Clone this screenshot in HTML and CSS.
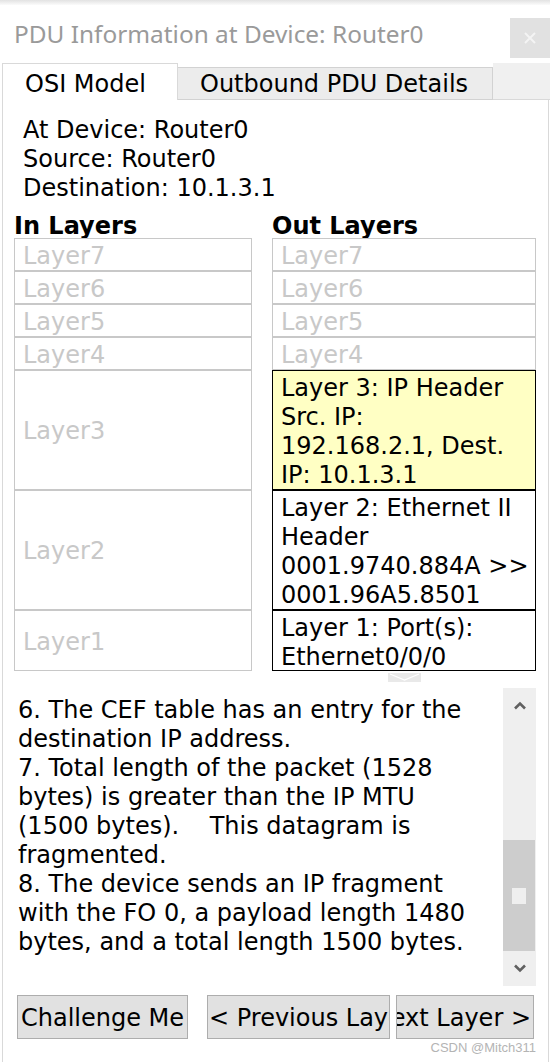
FILE: index.html
```html
<!DOCTYPE html>
<html>
<head>
<meta charset="utf-8">
<link rel="stylesheet" href="styles.css">
</head>
<body>
<div class="shadow"></div>
<header class="titlebar">
  <div class="title">PDU Information at Device: Router0</div>
  <div class="close">
    <svg width="12" height="12" viewBox="0 0 12 12"><path d="M1 1L11 11M11 1L1 11" stroke="#f4f4f4" stroke-width="2" fill="none"/></svg>
  </div>
</header>
<nav class="tabbar">
  <div class="tab active">OSI Model</div>
  <div class="tab">Outbound PDU Details</div>
  <div class="tabfill"></div>
</nav>
<main class="panel">
  <div class="info">
    <div>At Device: Router0</div>
    <div>Source: Router0</div>
    <div>Destination: 10.1.3.1</div>
  </div>
  <div class="columns">
    <section class="col col-in">
      <h2 class="colhead">In Layers</h2>
      <div class="layer gray h33">Layer7</div>
      <div class="layer gray h33">Layer6</div>
      <div class="layer gray h33">Layer5</div>
      <div class="layer gray h33">Layer4</div>
      <div class="layer gray h120">Layer3</div>
      <div class="layer gray h120">Layer2</div>
      <div class="layer gray h61">Layer1</div>
    </section>
    <section class="col col-out">
      <h2 class="colhead">Out Layers</h2>
      <div class="layer gray h33">Layer7</div>
      <div class="layer gray h33">Layer6</div>
      <div class="layer gray h33">Layer5</div>
      <div class="layer gray h33">Layer4</div>
      <div class="layer active-layer yellow h120">Layer 3: IP Header<br>Src. IP:<br>192.168.2.1, Dest.<br>IP: 10.1.3.1</div>
      <div class="layer active-layer h120">Layer 2: Ethernet II<br>Header<br>0001.9740.884A &gt;&gt;<br>0001.96A5.8501</div>
      <div class="layer active-layer h61">Layer 1: Port(s):<br>Ethernet0/0/0</div>
      <div class="expander">
        <svg width="33" height="9" viewBox="0 0 33 9"><rect x="0" y="0" width="33" height="9" fill="#e9e9e9"/><path d="M2 1L16.5 7L31 1" stroke="#ffffff" stroke-width="1.2" fill="none"/></svg>
      </div>
    </section>
  </div>
  <div class="textbox">
    <div class="textcontent">
      <div class="tl">6. The CEF table has an entry for the</div>
      <div class="tl">destination IP address.</div>
      <div class="tl">7. Total length of the packet (1528</div>
      <div class="tl">bytes) is greater than the IP MTU</div>
      <div class="tl">(1500 bytes).    This datagram is</div>
      <div class="tl">fragmented.</div>
      <div class="tl">8. The device sends an IP fragment</div>
      <div class="tl">with the FO 0, a payload length 1480</div>
      <div class="tl">bytes, and a total length 1500 bytes.</div>
    </div>
    <div class="scrollbar">
      <div class="sb-arrow">
        <svg width="12" height="9" viewBox="0 0 12 9"><path d="M1 7.5L6 2.5L11 7.5" stroke="#606060" stroke-width="2.6" fill="none"/></svg>
      </div>
      <div class="sb-track">
        <div class="sb-thumb"><div class="sb-grip"></div></div>
      </div>
      <div class="sb-arrow">
        <svg width="12" height="9" viewBox="0 0 12 9"><path d="M1 1.5L6 6.5L11 1.5" stroke="#606060" stroke-width="2.6" fill="none"/></svg>
      </div>
    </div>
  </div>
  <div class="buttons">
    <div class="btn btn-challenge">Challenge Me</div>
    <div class="btn btn-prev"><span>&lt; Previous Layer</span></div>
    <div class="btn btn-next"><span>Next Layer &gt;</span></div>
  </div>
  <div class="watermark">CSDN @Mitch311</div>
</main>
</body>
</html>
```

FILE: styles.css
```css
* { box-sizing: border-box; }
html, body { margin: 0; padding: 0; background: #ffffff; }
body {
  width: 550px;
  height: 1062px;
  overflow: hidden;
  font-family: "DejaVu Sans", Verdana, sans-serif;
  font-size: 24px;
  color: #000;
}
.shadow {
  height: 5px;
  background: linear-gradient(#e2e2e2, #fbfbfb);
}
.titlebar {
  height: 58px;
  display: flex;
  align-items: flex-start;
  background: #fff;
}
.title {
  font-family: "Noto Sans", "Open Sans", sans-serif;
  font-size: 24.4px;
  color: #9a9a9a;
  padding-left: 14px;
  line-height: 32px;
  margin-top: 13px;
  white-space: nowrap;
}
.close {
  margin-left: auto;
  margin-top: 13px;
  width: 40px;
  height: 40px;
  background: #e1e1e1;
  display: flex;
  align-items: center;
  justify-content: center;
}
.tabbar {
  height: 37px;
  display: flex;
  align-items: flex-end;
  margin-left: 2px;
}
.tab {
  height: 33px;
  width: 315px;
  background: #ececec;
  border: 1px solid #d2d2d2;
  border-left: none;
  line-height: 33px;
  padding-left: 22px;
  white-space: nowrap;
}
.tab.active {
  height: 37px;
  width: 176px;
  background: #fff;
  border: 1px solid #d9d9d9;
  border-bottom: none;
  line-height: 40px;
  padding-left: 22px;
}
.tabfill {
  flex: 1;
  height: 37px;
  background: #f0f0f0;
  border-bottom: 1px solid #d9d9d9;
}
.panel {
  margin-left: 2px;
  margin-right: 1px;
  height: 963px;
  border-left: 1px solid #d9d9d9;
  border-right: 1px solid #d9d9d9;
  background: #fff;
}
.info {
  padding-left: 20px;
  padding-top: 16px;
  line-height: 29px;
}
.columns {
  display: flex;
  gap: 20px;
  padding-left: 11px;
  margin-top: 7px;
}
.col-in { width: 238px; }
.col-out { width: 264px; }
.col { display: flex; flex-direction: column; }
.colhead {
  margin: 0;
  font-size: 24px;
  font-weight: bold;
  line-height: 32px;
  height: 28px;
  white-space: nowrap;
}
.layer {
  border: 1px solid #c8c8c8;
  padding-left: 8px;
  line-height: 29px;
  white-space: nowrap;
}
.layer.gray {
  color: #c8c8c8;
  display: flex;
  align-items: center;
  padding-top: 3px;
}
.h33 { height: 33px; }
.h120 { height: 120px; }
.h61 { height: 61px; }
.layer.active-layer {
  border-color: #000;
  padding-top: 3px;
  color: #000;
  overflow: hidden;
}
.yellow { background: #ffffc4; }
.expander {
  display: flex;
  justify-content: center;
  margin-top: 2px;
  height: 9px;
  line-height: 0;
}
.textbox {
  margin-top: 6px;
  margin-left: 11px;
  width: 522px;
  height: 298px;
  display: flex;
}
.textcontent {
  flex: 1;
  padding-left: 4px;
  padding-top: 8px;
  line-height: 29px;
  overflow: hidden;
}
.tl { white-space: pre; }
.scrollbar {
  width: 33px;
  background: #efefef;
  display: flex;
  flex-direction: column;
}
.sb-arrow {
  height: 37px;
  display: flex;
  align-items: center;
  justify-content: center;
}
.sb-track {
  flex: 1;
  padding-top: 117px;
}
.sb-thumb {
  height: 111px;
  margin-right: 1px;
  background: #cdcdcd;
  display: flex;
  align-items: center;
  justify-content: center;
}
.sb-grip {
  width: 14px;
  height: 16px;
  background: #efefef;
}
.buttons {
  display: flex;
  padding-left: 14px;
  margin-top: 9px;
  height: 44px;
}
.btn {
  height: 44px;
  background: #e1e1e1;
  border: 1px solid #adadad;
  display: flex;
  align-items: center;
  white-space: nowrap;
  overflow: hidden;
  line-height: 29px;
  padding-top: 2px;
}
.btn-challenge {
  width: 171px;
  justify-content: center;
}
.btn-prev {
  width: 183px;
  margin-left: 19px;
  justify-content: flex-start;
  padding-left: 1px;
}
.btn-next {
  width: 138px;
  margin-left: 6px;
  justify-content: flex-end;
  padding-right: 2px;
}
.btn-prev span, .btn-next span { flex-shrink: 0; }
.watermark {
  font-family: "Liberation Sans", Arial, sans-serif;
  font-size: 13px;
  color: #b4b4b4;
  text-align: right;
  padding-right: 12px;
  margin-top: 1px;
  line-height: 15px;
}
```
